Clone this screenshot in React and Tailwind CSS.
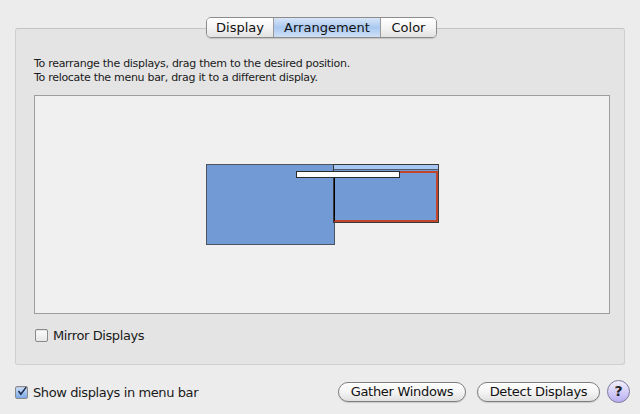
import { useState } from "react";

const font = { fontFamily: '"Lucida Grande", "DejaVu Sans", sans-serif' };

export default function App() {
    const [mirror, setMirror] = useState(false);
    const [showInMenu, setShowInMenu] = useState(true);

    return (
        <div
            className="w-[640px] h-[414px] bg-[#ececec] text-black relative overflow-hidden"
            style={font}
        >
            <div className="pt-[28px] px-[15px]">
                {/* group box */}
                <div className="h-[337px] bg-[#e4e4e4] border border-[#cfcfcf] border-t-[#c4c4c4] rounded-[3px] pt-[28px] px-[18px]">
                    <div className="text-[11px] leading-[14px] text-[#1a1a1a] tracking-[-0.3px]">
                        <p>To rearrange the displays, drag them to the desired position.</p>
                        <p>To relocate the menu bar, drag it to a different display.</p>
                    </div>
                    <ArrangementCanvas />
                    <label className="flex items-center gap-[5px] mt-[12px] ml-[1px] text-[13px] tracking-[-0.4px] text-[#1a1a1a]">
                        <Checkbox checked={mirror} onClick={() => setMirror(!mirror)} />
                        <span>Mirror Displays</span>
                    </label>
                </div>
            </div>

            {/* tabs */}
            <div className="absolute left-[206px] top-[17px] flex h-[21px] rounded-[5px] border border-[#8c8c8c] overflow-hidden shadow-[0_1px_1px_rgba(0,0,0,0.15)] text-[13px]">
                <Tab label="Display" w="w-[67px]" />
                <Tab label="Arrangement" w="w-[107px]" active />
                <Tab label="Color" w="w-[55px]" last />
            </div>

            {/* bottom bar */}
            <div className="absolute left-[15px] right-[10px] top-[380px] flex items-center">
                <label className="flex items-center gap-[5px] text-[13px] tracking-[-0.4px] text-[#1a1a1a] mt-[2px]">
                    <Checkbox checked={showInMenu} onClick={() => setShowInMenu(!showInMenu)} />
                    <span>Show displays in menu bar</span>
                </label>
                <div className="ml-auto flex items-center gap-[11px]">
                    <PillButton label="Gather Windows" w="w-[128px]" />
                    <PillButton label="Detect Displays" w="w-[123px]" />
                    <div className="w-[23px] h-[23px] rounded-full border border-[#7a7a9a] bg-gradient-to-b from-[#f4f0ff] to-[#b9aef0] flex items-center justify-center text-[14px] font-bold text-[#222] -ml-[4px]">
                        ?
                    </div>
                </div>
            </div>
        </div>
    );
}

const Tab = ({ label, w, active, last }) => (
    <div
        className={`${w} flex items-center justify-center ${
            last ? "" : "border-r border-[#9a9a9a]"
        } ${
            active
                ? "bg-gradient-to-b from-[#d8e6f8] via-[#a9c8f0] to-[#cfe0f7] text-[#111]"
                : "bg-gradient-to-b from-white via-[#f4f4f4] to-[#e2e2e2] text-[#111]"
        }`}
    >
        {label}
    </div>
);

const ArrangementCanvas = () => {
    return (
        <div className="mt-[10px] w-[576px] h-[219px] bg-[#f0f0f0] border border-[#9d9d9d] relative">
            {/* main display */}
            <div className="absolute left-[171px] top-[68px] w-[129px] h-[81px] bg-[#729ad4] border-[1.5px] border-[#4f5560]" />
            {/* secondary display */}
            <div className="absolute left-[298px] top-[68px] w-[106px] h-[59px] bg-[#729ad4] border border-[#3a3a3a]">
                <div className="h-[5px] bg-[#a6c6f4] border-b border-[#50586a]" />
                <div className="absolute left-0 right-0 top-[6px] bottom-0 border-2 border-[#c2442a] border-l-black border-l-[1.5px]" />
            </div>
            {/* menu bar being dragged */}
            <div className="absolute left-[261px] top-[75px] w-[104px] h-[7px] bg-white border border-[#2a2a2a]" />
        </div>
    );
};

const Checkbox = ({ checked, onClick }) => (
    <span
        onClick={onClick}
        className={`w-[13px] h-[13px] rounded-[2px] border border-[#8a8a8a] flex items-center justify-center shadow-[inset_0_1px_1px_rgba(0,0,0,0.1)] ${
            checked
                ? "bg-gradient-to-b from-[#cfe0f8] to-[#7aa8e6]"
                : "bg-gradient-to-b from-[#fdfdfd] to-[#e6e6e6]"
        }`}
    >
        {checked && (
            <svg width="13" height="13" viewBox="0 0 13 13" className="-mt-[2px] ml-[1px]">
                <path
                    d="M2.5 6.5 L5 10 L11.5 1.5"
                    fill="none"
                    stroke="#1e2a4a"
                    strokeWidth="2"
                    strokeLinecap="round"
                    strokeLinejoin="round"
                />
            </svg>
        )}
    </span>
);

const PillButton = ({ label, w }) => (
    <button
        className={`${w} h-[20px] rounded-full border border-[#7e7e7e] bg-gradient-to-b from-white via-[#f4f4f4] to-[#e0e0e0] text-[13px] tracking-[-0.3px] text-[#111] flex items-center justify-center shadow-[0_1px_1px_rgba(0,0,0,0.15)]`}
    >
        {label}
    </button>
);
